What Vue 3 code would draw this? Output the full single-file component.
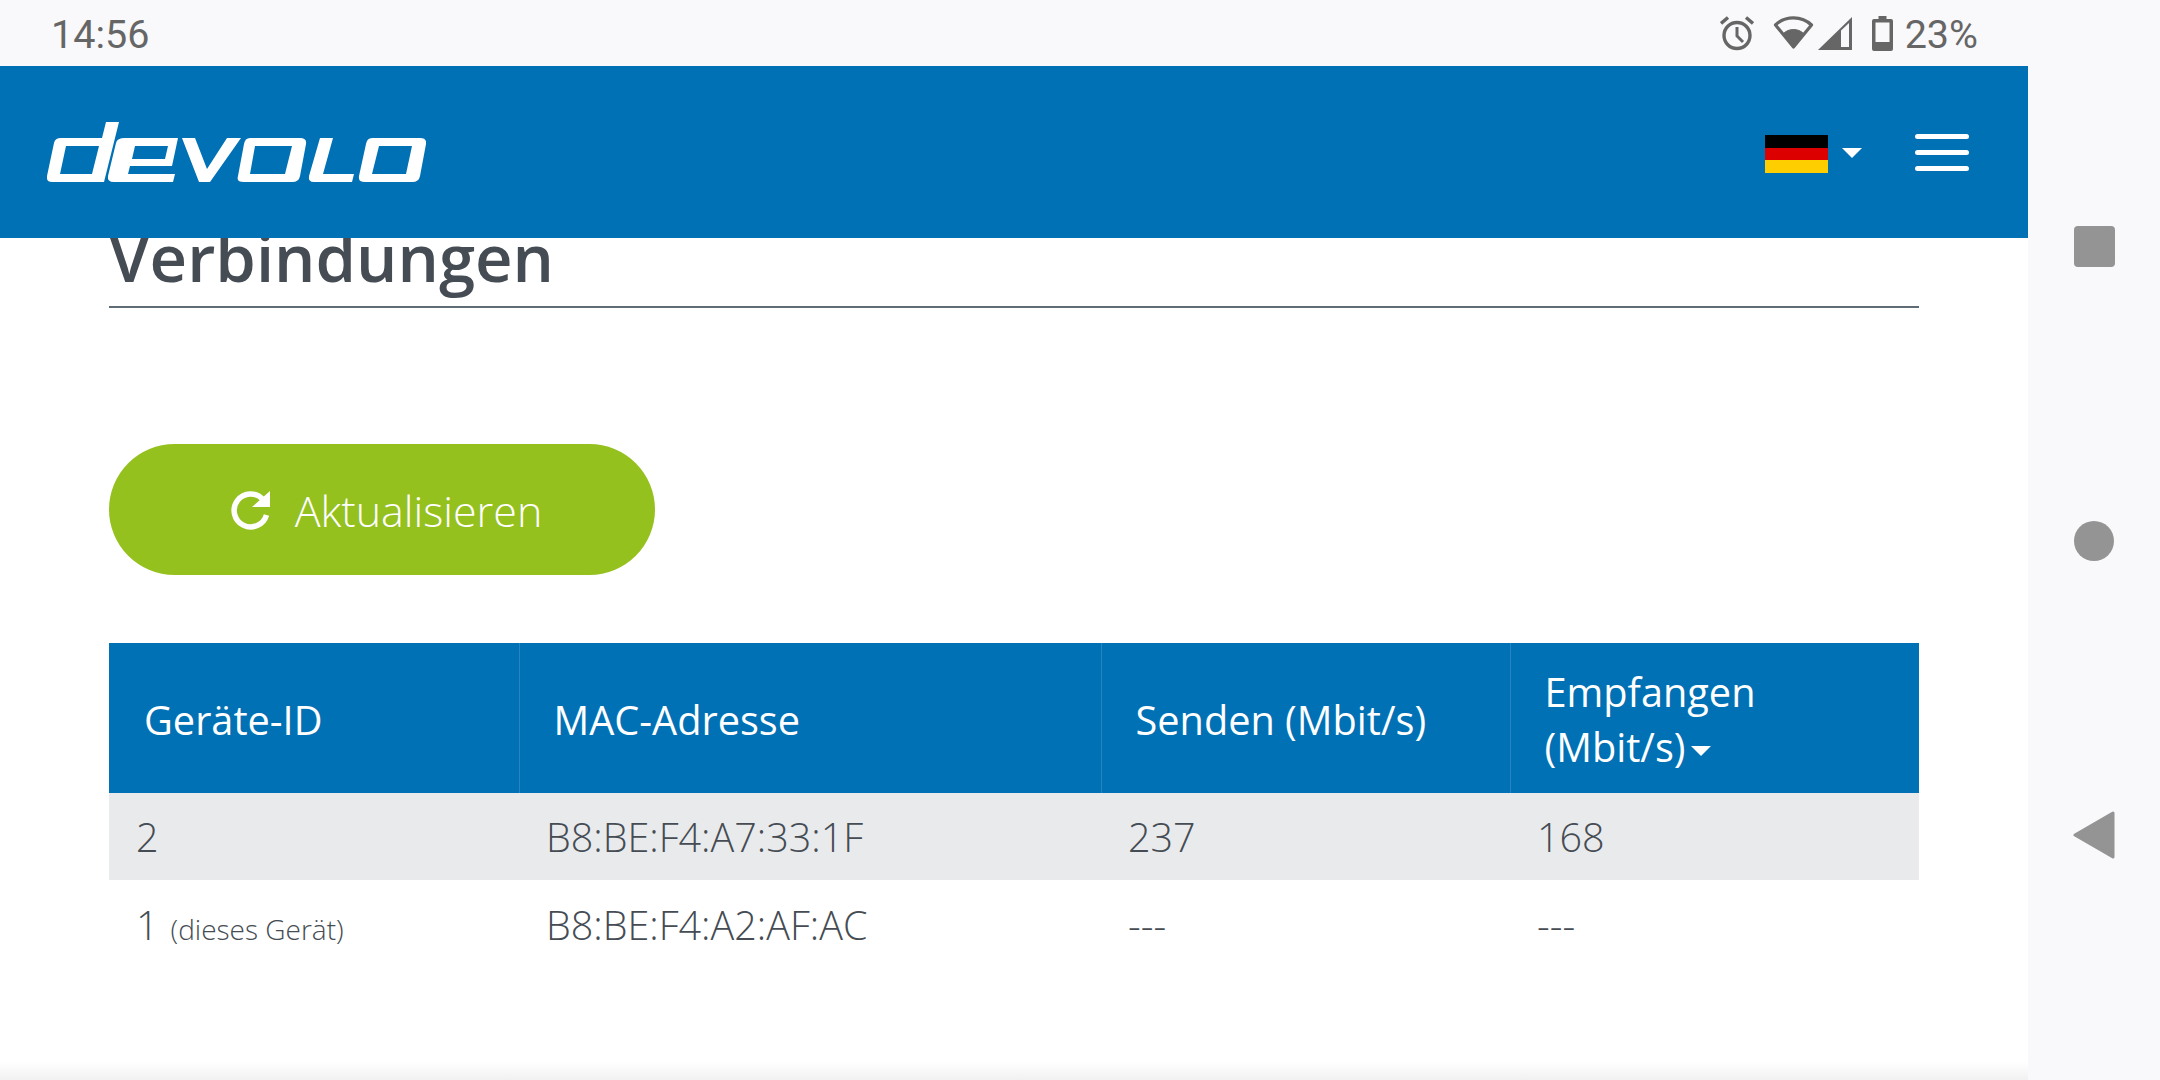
<script setup>
const columns = [
  { label: 'Geräte-ID', width: 410 },
  { label: 'MAC-Adresse', width: 582 },
  { label: 'Senden (Mbit/s)', width: 409 },
  { label: 'Empfangen (Mbit/s)', width: 409, sorted: true },
]

const rows = [
  { id: '2', mac: 'B8:BE:F4:A7:33:1F', send: '237', receive: '168' },
  { id: '1', note: '(dieses Gerät)', mac: 'B8:BE:F4:A2:AF:AC', send: '---', receive: '---' },
]
</script>

<template>
  <div class="screen">
    <div class="main">
      <div class="statusbar">
        <span class="clock">14:56</span>
        <div class="status-icons">
          <svg class="ic-alarm" width="34" height="35" viewBox="0 0 34 35">
            <circle cx="17" cy="19.5" r="13" fill="none" stroke="#666" stroke-width="3.4" />
            <path d="M17 11v9l6 6" fill="none" stroke="#666" stroke-width="3" />
            <path d="M1 7.5 8 1.500M33 7.5 26 1.500" fill="none" stroke="#666" stroke-width="3.400" />
          </svg>
          <svg class="ic-wifi" width="41" height="34" viewBox="0 0 41 34">
            <path d="M20.500 1.800C13 1.800 7 4.500 2.500 9L20.500 31 38.500 9C34 4.500 28 1.800 20.500 1.800Z" fill="none" stroke="#666" stroke-width="3.200" stroke-linejoin="round" />
            <path d="M10.500 17.500C13 15 16.500 13.500 20.500 13.500S28 15 30.500 17.500L20.500 31Z" fill="#666" stroke="#666" />
          </svg>
          <svg class="ic-signal" width="34" height="33" viewBox="0 0 34 33">
            <path d="M0 33 34 0V33Z" fill="#666" />
            <path d="M23 13.500 31 6V30H23Z" fill="#f9f9fb" />
          </svg>
          <svg class="ic-battery" width="21" height="35" viewBox="0 0 21 35">
            <path d="M6.500 0h8v3h4.500a2 2 0 0 1 2 2v28a2 2 0 0 1-2 2H2a2 2 0 0 1-2-2V5a2 2 0 0 1 2-2h4.500Z" fill="#666" />
            <rect x="3.500" y="6.500" width="14" height="19.500" fill="#f9f9fb" />
          </svg>
          <span class="percent">23%</span>
        </div>
      </div>

      <header class="topbar">
        <svg class="logo" width="379" height="60" viewBox="7 6 379 60" role="img" aria-label="devolo">
          <path fill="#fff" fill-rule="evenodd" d="M66 6H79L64 66H12Q6 66 7 60L14 27Q15 22 21 22H62ZM26 30 20 58H52L59 30Z" />
          <path fill="#fff" fill-rule="evenodd" d="M85 22H138L132 50H90L88 58H135L133 66H74Q67 66 68 60L76 27Q77 22 85 22ZM95 30 92 43H125L128 30Z" />
          <path fill="#fff" d="M142 22H155L167 53 187 22H201L170 66H159Z" />
          <path fill="#fff" fill-rule="evenodd" d="M210 22H260Q267 22 266 28L260 60Q259 66 252 66H204Q196 66 198 60L204 28Q205 22 210 22ZM215 30 210 58H245L252 30Z" />
          <path fill="#fff" d="M280 22H293L283 58H314L312 66H274Q268 66 269 60Z" />
          <path fill="#fff" fill-rule="evenodd" d="M332 22H380Q387 22 386 28L380 60Q379 66 372 66H325Q318 66 319 60L326 28Q327 22 332 22ZM339 30 332 58H366L372 30Z" />
        </svg>
        <div class="topbar-right">
          <div class="flag"><i class="black"></i><i class="red"></i><i class="gold"></i></div>
          <span class="caret"></span>
          <div class="burger"><i></i><i></i><i></i></div>
        </div>
      </header>

      <main class="content">
        <h1 class="title">Verbindungen</h1>

        <button class="refresh" type="button">
          <svg width="40" height="40" viewBox="0 0 40 40">
            <path d="M33 8.500A16.500 16.500 0 1 0 36.500 24" fill="none" stroke="#fff" stroke-width="5.500" />
            <path d="M22 16H40V0Z" fill="#fff" />
          </svg>
          <span>Aktualisieren</span>
        </button>

        <table class="devices">
          <colgroup>
            <col v-for="col in columns" :key="col.label" :style="{ width: col.width + 'px' }" />
          </colgroup>
          <thead>
            <tr>
              <th v-for="col in columns" :key="col.label">
                {{ col.label }}<span v-if="col.sorted" class="sort"></span>
              </th>
            </tr>
          </thead>
          <tbody>
            <tr v-for="row in rows" :key="row.mac">
              <td>{{ row.id }}<small v-if="row.note" class="note">{{ row.note }}</small></td>
              <td>{{ row.mac }}</td>
              <td>{{ row.send }}</td>
              <td>{{ row.receive }}</td>
            </tr>
          </tbody>
        </table>
      </main>
    </div>

    <nav class="navbar">
      <span class="nav-square"></span>
      <span class="nav-circle"></span>
      <svg width="42" height="48" viewBox="0 0 42 48">
        <path d="M2 24 40 2V46Z" fill="#949494" stroke="#949494" stroke-width="3" stroke-linejoin="round" />
      </svg>
    </nav>
  </div>
</template>

<style scoped>
.screen {
  display: flex;
  width: 2160px;
  height: 1080px;
  overflow: hidden;
  background: #fff;
  font-family: "Open Sans", sans-serif;
}

.main {
  position: relative;
  display: flex;
  flex-direction: column;
  width: 2028px;
  height: 1080px;
}

.main::after {
  content: '';
  position: absolute;
  left: 0;
  right: 0;
  bottom: 0;
  height: 18px;
  background: linear-gradient(to bottom, rgba(240, 240, 240, 0), #f1f1f1);
}

.statusbar {
  display: flex;
  align-items: center;
  justify-content: space-between;
  flex: none;
  height: 66px;
  padding: 2px 50px 0 51px;
  box-sizing: border-box;
  background: #f9f9fb;
  color: #666;
  font-family: Roboto, sans-serif;
  font-size: 39.5px;
}

.status-icons {
  display: flex;
  align-items: center;
}

.status-icons svg {
  position: relative;
  top: -1px;
}

.ic-wifi {
  margin-left: 19px;
}

.ic-signal {
  margin-left: 4px;
}

.ic-battery {
  margin-left: 20px;
}

.percent {
  margin-left: 12px;
}

.topbar {
  display: flex;
  align-items: center;
  flex: none;
  height: 172px;
  padding: 0 59px 0 47px;
  background: #0071b5;
}

.topbar-right {
  display: flex;
  align-items: center;
  margin-left: auto;
}

.flag {
  display: flex;
  flex-direction: column;
  width: 63px;
  height: 38px;
  margin-top: 4px;
}

.flag i {
  flex: 1;
}

.black { background: #000; }
.red { background: #dd0000; }
.gold { background: #ffce00; }

.caret {
  width: 0;
  height: 0;
  margin: 2px 53px 0 14px;
  border-left: 10px solid transparent;
  border-right: 10px solid transparent;
  border-top: 10px solid #fff;
}

.burger {
  display: flex;
  flex-direction: column;
  gap: 11px;
  width: 54px;
}

.burger i {
  height: 5px;
  border-radius: 3px;
  background: #fff;
}

.content {
  flex: 1;
  min-height: 0;
  padding: 0 109px;
  overflow: hidden;
}

.title {
  height: 60px;
  margin: 0 0 136px;
  padding-bottom: 8px;
  border-bottom: 2px solid #5f6b75;
  color: #454c53;
  font-size: 65.2px;
  font-weight: 600;
  line-height: 37px;
  box-sizing: content-box;
}

.refresh {
  display: flex;
  align-items: center;
  justify-content: center;
  gap: 25px;
  width: 546px;
  height: 131px;
  padding: 2px 0 0 8px;
  box-sizing: border-box;
  border: 0;
  border-radius: 66px;
  background: #95c11f;
  color: #fff;
  font-family: inherit;
  font-size: 43px;
  font-weight: 300;
}

.devices {
  width: 1810px;
  margin-top: 68px;
  border-collapse: collapse;
  table-layout: fixed;
  color: #454c53;
  font-size: 39.5px;
  font-weight: 300;
}

th {
  height: 146px;
  padding: 4px 30px 0 34px;
  border-left: 1px solid #2a82bf;
  background: #0071b5;
  color: #fff;
  font-size: 39.7px;
  font-weight: 400;
  line-height: 55px;
  text-align: left;
}

th:first-child {
  border-left: 0;
  padding-left: 35px;
}

td {
  height: 87px;
  padding: 0 0 0 27px;
}

tbody tr:first-child {
  background: #e9eaec;
}

tbody tr:last-child td {
  padding-top: 1px;
}

.note {
  margin-left: 12px;
  font-size: 28px;
}

.sort {
  display: inline-block;
  margin-left: 5px;
  vertical-align: middle;
  border-left: 10px solid transparent;
  border-right: 10px solid transparent;
  border-top: 10px solid #fff;
}

.navbar {
  display: flex;
  flex-direction: column;
  align-items: center;
  width: 132px;
  height: 1080px;
  background: #f9f9fb;
}

.nav-square {
  width: 41px;
  height: 41px;
  margin-top: 226px;
  border-radius: 4px;
  background: #949494;
}

.nav-circle {
  width: 40px;
  height: 40px;
  margin-top: 254px;
  border-radius: 50%;
  background: #949494;
}

.navbar svg {
  margin-top: 250px;
}
</style>
